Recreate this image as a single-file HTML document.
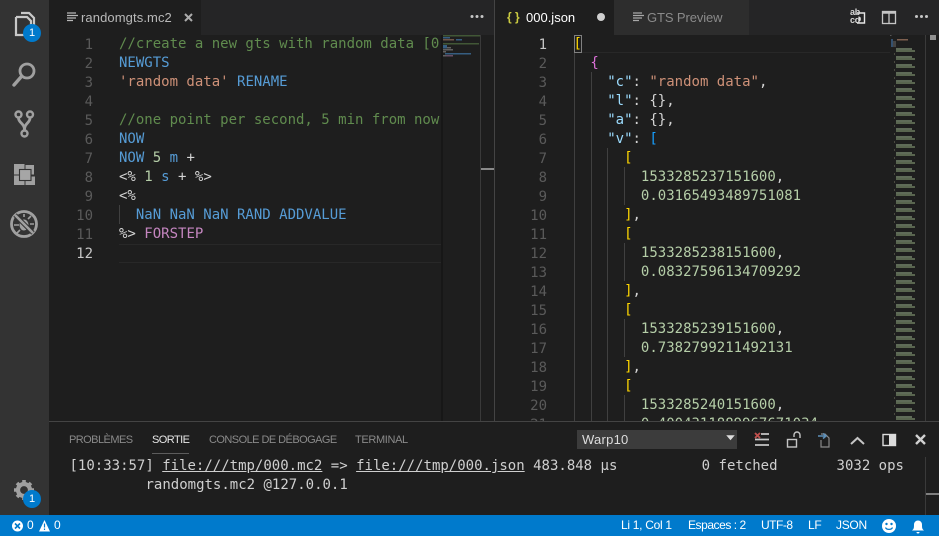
<!DOCTYPE html>
<html><head><meta charset="utf-8">
<style>
html,body{margin:0;padding:0;width:939px;height:536px;overflow:hidden;background:#1e1e1e}
.a{position:absolute}
.ui{font-family:"Liberation Sans",sans-serif;white-space:pre}
.m{font-family:"DejaVu Sans Mono","Liberation Mono",monospace;font-size:14px;line-height:19px;white-space:pre;color:#d4d4d4}
.ln{position:absolute;text-align:right;width:30px;color:#5a5a5a;margin-top:1px}
.cur{color:#c6c6c6}
.l{position:absolute;height:19px}
.c{color:#608b4e}.k{color:#569cd6}.s{color:#ce9178}.n{color:#b5cea8}.p{color:#c586c0}.j{color:#9cdcfe}
.g{color:#ffd700}.b{color:#da70d6}.u{color:#179fff}
.ig{position:absolute;width:1px;background:#404040}
.t{font-size:11px;top:434px;line-height:13px;color:#8a8a8a;letter-spacing:-.55px}
.st{font-size:12px;line-height:21px;top:515px;color:#fff;letter-spacing:-.3px}
</style></head><body>
<div class="a" style="left:0;top:0;width:939px;height:536px;overflow:hidden">

<!-- activity bar -->
<div class="a" style="left:0;top:0;width:49px;height:515px;background:#333"></div>
<svg class="a" style="left:0;top:0" width="49" height="515" fill="none">
 <path d="M21 13h8l5 5v14M16 17h11l4 4v13M16 17v18h9" stroke="#c8c8c8" stroke-width="2.2"/>
 <circle cx="27" cy="71" r="7" stroke="#a0a0a0" stroke-width="2.8"/>
 <path d="M21 77l-7 8" stroke="#a0a0a0" stroke-width="3.4" stroke-linecap="round"/>
 <g stroke="#a0a0a0" stroke-width="2.4">
  <circle cx="18.500" cy="114.500" r="3"/><circle cx="30" cy="114.500" r="3"/><circle cx="24.500" cy="133.500" r="3"/>
  <path d="M18.500 118c0 5 6 5 6 12M30 118c0 5-5.500 5-5.500 12" stroke-width="2.800"/>
 </g>
 <rect x="14" y="164" width="21" height="21" fill="#a0a0a0"/>
 <rect x="19.500" y="169.500" width="11.500" height="11" fill="#a6a6a6" stroke="#333" stroke-width="1.100"/>
 <path d="M25 164.500H34.500V175H31M25 164v5M25 181v4M14 175h5.500M31 176h4" stroke="#333" stroke-width="1"/>
 <circle cx="24" cy="224" r="12.500" stroke="#a0a0a0" stroke-width="2.800"/>
 <path d="M20 220l-4 -2M19 225h-5M20 230l-3 3M28 219l3-3M30 224h4M29 230l3 2M24 214v3" stroke="#a0a0a0" stroke-width="1.600"/>
 <ellipse cx="24" cy="225" rx="4.500" ry="5.500" fill="#a0a0a0"/>
 <path d="M15 215l18 18" stroke="#333" stroke-width="4.600"/>
 <path d="M15 215l18 18" stroke="#a0a0a0" stroke-width="2.600"/>
 <g transform="translate(24 490)">
  <circle r="6" stroke="#a0a0a0" stroke-width="4.200"/>
  <path d="M0-10V-7M0 7V10M-10 0H-7M7 0H10M-7-7L-5-5M5 5L7 7M-7 7L-5 5M5-5L7-7" stroke="#a0a0a0" stroke-width="3.600"/>
 </g>
 <circle cx="32" cy="33" r="9" fill="#007acc"/>
 <circle cx="32" cy="499" r="9" fill="#007acc"/>
</svg>
<div class="a ui" style="left:23px;top:26px;width:18px;text-align:center;font-size:11px;line-height:14px;color:#fff">1</div>
<div class="a ui" style="left:23px;top:492px;width:18px;text-align:center;font-size:11px;line-height:14px;color:#fff">1</div>

<!-- tab bars -->
<div class="a" style="left:49px;top:0;width:445px;height:35px;background:#252526"></div>
<div class="a" style="left:49px;top:0;width:152px;height:35px;background:#1e1e1e"></div>
<div class="a" style="left:495px;top:0;width:444px;height:35px;background:#252526"></div>
<div class="a" style="left:495px;top:0;width:119px;height:35px;background:#1e1e1e"></div>
<div class="a" style="left:614px;top:0;width:135px;height:35px;background:#2d2d2d"></div>
<div class="a" style="left:494px;top:0;width:1px;height:421px;background:#444"></div>

<svg class="a" style="left:0;top:0" width="939" height="35" fill="none">
 <path d="M67 13h9M67 15.500h11M67 18h9M67 20.500h6" stroke="#b8b8b8" stroke-width="1.300"/>
 <path d="M185 14l7 7M192 14l-7 7" stroke="#ababab" stroke-width="2"/>
 <circle cx="472" cy="16.500" r="1.500" fill="#c5c5c5"/><circle cx="477" cy="16.500" r="1.500" fill="#c5c5c5"/><circle cx="482" cy="16.500" r="1.500" fill="#c5c5c5"/>
 <circle cx="601" cy="17" r="4" fill="#cfcfcf"/>
 <path d="M633 13h9M633 15.500h11M633 18h9M633 20.500h6" stroke="#a8a8a8" stroke-width="1.300"/>
 <path d="M857 13h7.500v10H857" stroke="#e6e6e6" stroke-width="1.400"/>
 <path d="M858 19h3M860 17v4" stroke="#e6e6e6" stroke-width="1"/>
 <rect x="882.500" y="11.500" width="13" height="12" stroke="#c5c5c5" stroke-width="1.300"/>
 <path d="M882 12.500h14" stroke="#c5c5c5" stroke-width="2.500"/><path d="M889 12v12" stroke="#c5c5c5" stroke-width="1.300"/>
 <circle cx="916.500" cy="16.500" r="1.500" fill="#c5c5c5"/><circle cx="921.500" cy="16.500" r="1.500" fill="#c5c5c5"/><circle cx="926.500" cy="16.500" r="1.500" fill="#c5c5c5"/>
</svg>
<div class="a ui" style="left:850px;top:8px;font-size:9px;line-height:8px;color:#d8d8d8;font-weight:bold;letter-spacing:-.3px">ab<br>cd</div>
<div class="a ui" style="left:81px;top:9px;font-size:13px;line-height:17px;color:#b9b9b9;letter-spacing:.1px">randomgts.mc2</div>
<div class="a ui" style="left:507px;top:9px;font-size:12px;line-height:17px;color:#cbcb41;font-weight:bold">{ }</div>
<div class="a ui" style="left:526px;top:9px;font-size:13px;line-height:17px;color:#fff">000.json</div>
<div class="a ui" style="left:647px;top:9px;font-size:13px;line-height:17px;color:#8a8a8a;letter-spacing:-.1px">GTS Preview</div>

<!-- left editor -->
<div class="a" style="left:49px;top:35px;width:445px;height:386px;overflow:hidden">
 <div class="a" style="left:70px;top:209px;width:322px;height:19px;box-sizing:border-box;border-top:1px solid #282828;border-bottom:1px solid #282828"></div>
 <div class="ig" style="left:70px;top:170px;height:19px"></div>
</div>
<div class="a m" style="left:49px;top:35px;width:392px;height:386px;overflow:hidden">
<span class="ln" style="left:14px;top:0">1</span><span class="ln" style="left:14px;top:19px">2</span><span class="ln" style="left:14px;top:38px">3</span><span class="ln" style="left:14px;top:57px">4</span><span class="ln" style="left:14px;top:76px">5</span><span class="ln" style="left:14px;top:95px">6</span><span class="ln" style="left:14px;top:114px">7</span><span class="ln" style="left:14px;top:133px">8</span><span class="ln" style="left:14px;top:152px">9</span><span class="ln" style="left:14px;top:171px">10</span><span class="ln" style="left:14px;top:190px">11</span><span class="ln cur" style="left:14px;top:209px">12</span>
<span class="l c" style="left:70px;top:0">//create a new gts with random data [0</span>
<span class="l k" style="left:70px;top:19px">NEWGTS</span>
<span class="l" style="left:70px;top:38px"><span class="s">'random data'</span> <span class="k">RENAME</span></span>
<span class="l c" style="left:70px;top:76px">//one point per second, 5 min from now</span>
<span class="l k" style="left:70px;top:95px">NOW</span>
<span class="l" style="left:70px;top:114px"><span class="k">NOW</span> <span class="n">5</span> <span class="k">m</span> +</span>
<span class="l" style="left:70px;top:133px">&lt;% <span class="n">1</span> <span class="k">s</span> + %&gt;</span>
<span class="l" style="left:70px;top:152px">&lt;%</span>
<span class="l k" style="left:70px;top:171px">  NaN NaN NaN RAND ADDVALUE</span>
<span class="l" style="left:70px;top:190px">%&gt; <span class="p">FORSTEP</span></span>
</div>

<!-- left minimap -->
<svg class="a" style="left:441px;top:35px" width="53" height="386">
 <rect x="0" y="0" width="2" height="386" fill="#171717"/>
 <rect x="39" y="0" width="1" height="386" fill="#3a3a3a"/>
 <rect x="40" y="133" width="14" height="2" fill="#8a8a8a"/>
 <g opacity=".75">
 <rect x="2" y="0" width="37" height="1.500" fill="#4d6b3f"/>
 <rect x="2" y="2" width="7" height="1.500" fill="#3f74a3"/>
 <rect x="2" y="4" width="11" height="1.500" fill="#8c6a58"/><rect x="15" y="4" width="6" height="1.500" fill="#3f74a3"/>
 <rect x="2" y="8" width="36" height="1.500" fill="#4d6b3f"/>
 <rect x="2" y="10" width="4" height="3.500" fill="#3f74a3"/>
 <rect x="6" y="12" width="4" height="1.500" fill="#777"/>
 <rect x="2" y="14" width="10" height="1.500" fill="#777"/>
 <rect x="2" y="16" width="3" height="1.500" fill="#777"/>
 <rect x="4" y="18" width="26" height="1.500" fill="#3f74a3"/>
 <rect x="2" y="20" width="3" height="1.500" fill="#777"/><rect x="5" y="20" width="7" height="1.500" fill="#805f7c"/>
 </g>
</svg>

<!-- right editor -->
<div class="a" style="left:495px;top:35px;width:431px;height:386px;overflow:hidden">
 <div class="a" style="left:79px;top:-1px;width:316px;height:19px;box-sizing:border-box;border-top:1px solid #282828;border-bottom:1px solid #282828"></div>
 <div class="a" style="left:79px;top:0;width:8px;height:18px;box-sizing:border-box;border:1px solid #808080"></div>
</div>
<div class="ig" style="left:574px;top:53px;height:368px"></div>
<div class="ig" style="left:591px;top:72px;height:349px"></div>
<div class="ig" style="left:607px;top:148px;height:273px"></div>
<div class="ig" style="left:624px;top:167px;height:38px"></div>
<div class="ig" style="left:624px;top:243px;height:38px"></div>
<div class="ig" style="left:624px;top:319px;height:38px"></div>
<div class="ig" style="left:624px;top:395px;height:26px"></div>
<div class="a m" style="left:495px;top:35px;width:395px;height:386px;overflow:hidden">
<span class="ln cur" style="left:22px;top:0">1</span><span class="ln" style="left:22px;top:19px">2</span><span class="ln" style="left:22px;top:38px">3</span><span class="ln" style="left:22px;top:57px">4</span><span class="ln" style="left:22px;top:76px">5</span><span class="ln" style="left:22px;top:95px">6</span><span class="ln" style="left:22px;top:114px">7</span><span class="ln" style="left:22px;top:133px">8</span><span class="ln" style="left:22px;top:152px">9</span><span class="ln" style="left:22px;top:171px">10</span><span class="ln" style="left:22px;top:190px">11</span><span class="ln" style="left:22px;top:209px">12</span><span class="ln" style="left:22px;top:228px">13</span><span class="ln" style="left:22px;top:247px">14</span><span class="ln" style="left:22px;top:266px">15</span><span class="ln" style="left:22px;top:285px">16</span><span class="ln" style="left:22px;top:304px">17</span><span class="ln" style="left:22px;top:323px">18</span><span class="ln" style="left:22px;top:342px">19</span><span class="ln" style="left:22px;top:361px">20</span><span class="ln" style="left:22px;top:380px">21</span>
<span class="l g" style="left:78.500px;top:0">[</span>
<span class="l b" style="left:78.500px;top:19px">  {</span>
<span class="l" style="left:78.500px;top:38px">    <span class="j">"c"</span>: <span class="s">"random data"</span>,</span>
<span class="l" style="left:78.500px;top:57px">    <span class="j">"l"</span>: {},</span>
<span class="l" style="left:78.500px;top:76px">    <span class="j">"a"</span>: {},</span>
<span class="l" style="left:78.500px;top:95px">    <span class="j">"v"</span>: <span class="u">[</span></span>
<span class="l g" style="left:78.500px;top:114px">      [</span>
<span class="l n" style="left:78.500px;top:133px">        1533285237151600<span style="color:#d4d4d4">,</span></span>
<span class="l n" style="left:78.500px;top:152px">        0.03165493489751081</span>
<span class="l" style="left:78.500px;top:171px">      <span class="g">]</span>,</span>
<span class="l g" style="left:78.500px;top:190px">      [</span>
<span class="l n" style="left:78.500px;top:209px">        1533285238151600<span style="color:#d4d4d4">,</span></span>
<span class="l n" style="left:78.500px;top:228px">        0.08327596134709292</span>
<span class="l" style="left:78.500px;top:247px">      <span class="g">]</span>,</span>
<span class="l g" style="left:78.500px;top:266px">      [</span>
<span class="l n" style="left:78.500px;top:285px">        1533285239151600<span style="color:#d4d4d4">,</span></span>
<span class="l n" style="left:78.500px;top:304px">        0.7382799211492131</span>
<span class="l" style="left:78.500px;top:323px">      <span class="g">]</span>,</span>
<span class="l g" style="left:78.500px;top:342px">      [</span>
<span class="l n" style="left:78.500px;top:361px">        1533285240151600<span style="color:#d4d4d4">,</span></span>
<span class="l n" style="left:78.500px;top:380px">        0.4004311889967671034</span>
</div>

<!-- right minimap -->
<svg class="a" style="left:890px;top:35px" width="49" height="386">
 <defs>
  <pattern id="mm" x="0" y="13" width="49" height="8" patternUnits="userSpaceOnUse">
   <rect x="6" y="0" width="16" height="2" fill="#5f6b58"/>
   <rect x="6" y="2" width="19" height="2" fill="#59654f"/>
   <rect x="4" y="5" width="1" height="2" fill="#4a4a40"/>
  </pattern>
 </defs>
 <rect x="0" y="13" width="25" height="373" fill="url(#mm)"/>
 <rect x="0" y="0" width="1.500" height="1" fill="#555"/>
 <rect x="1" y="4" width="2" height="8" fill="#34506e"/>
 <rect x="7" y="4" width="11" height="1.500" fill="#7d5f4f"/>
 <rect x="3" y="6" width="3" height="6" fill="#444"/>
 <rect x="35" y="0" width="1" height="386" fill="#3a3a3a"/>
 <rect x="40" y="-1" width="6" height="6" fill="#909090"/>
</svg>

<!-- panel -->
<div class="a" style="left:49px;top:421px;width:890px;height:94px;background:#1e1e1e;border-top:1px solid #444;box-sizing:border-box"></div>
<div class="a ui t" style="left:69px">PROBLÈMES</div>
<div class="a ui t" style="left:152px;color:#e7e7e7">SORTIE</div>
<div class="a" style="left:152px;top:453px;width:37px;height:1px;background:#5c5c5c"></div>
<div class="a ui t" style="left:209px">CONSOLE DE DÉBOGAGE</div>
<div class="a ui t" style="left:355px;letter-spacing:-.35px">TERMINAL</div>
<div class="a" style="left:577px;top:430px;width:160px;height:19px;background:#3c3c3c"></div>
<div class="a ui" style="left:582px;top:431px;font-size:13px;line-height:17px;color:#ddd;letter-spacing:.25px">Warp10</div>
<svg class="a" style="left:720px;top:424px" width="219" height="32" fill="none">
 <path d="M5 12h10l-5 6z" fill="#ddd" transform="translate(2,1) scale(.85)"/>
 <path d="M41 10h8M35 15.500h14M35 21h14" stroke="#c5c5c5" stroke-width="1.800"/>
 <path d="M35 9l5 5M40 9l-5 5" stroke="#c0504d" stroke-width="1.800"/>
 <rect x="67.500" y="15.500" width="9" height="7.500" stroke="#c5c5c5" stroke-width="1.400"/>
 <path d="M74 13v-2a3 3 0 016 0v3" stroke="#c5c5c5" stroke-width="1.400"/>
 <path d="M101 10h4l4 4v9H101v-7" stroke="#8a8a8a" stroke-width="1.200"/>
 <path d="M98 12h7M103 9.500l3 2.500-3 2.500" stroke="#5d8fb8" stroke-width="1.500"/>
 <path d="M131 20l6.500-6 6.500 6" stroke="#c5c5c5" stroke-width="2"/>
 <rect x="163" y="10.500" width="12.500" height="11" stroke="#dcdcdc" stroke-width="1.400"/>
 <rect x="169" y="10" width="7" height="12" fill="#dcdcdc"/>
 <path d="M196 11l9 9M205 11l-9 9" stroke="#d0d0d0" stroke-width="2.400"/>
</svg>
<div class="a m" style="left:69.500px;top:457px;color:#cfcfcf">[10:33:57] <span style="text-decoration:underline">file:///tmp/000.mc2</span> =&gt; <span style="text-decoration:underline">file:///tmp/000.json</span> 483.848 µs          0 fetched       3032 ops</div>
<div class="a m" style="left:145.500px;top:476px;color:#cfcfcf">randomgts.mc2 @127.0.0.1</div>
<div class="a" style="left:925px;top:457px;width:1px;height:58px;background:#3a3a3a"></div>
<div class="a" style="left:926px;top:493px;width:13px;height:2px;background:#808080"></div>

<!-- status bar -->
<div class="a" style="left:0;top:515px;width:939px;height:21px;background:#007acc"></div>
<svg class="a" style="left:0;top:515px" width="939" height="21" fill="none">
 <circle cx="17.500" cy="11" r="5.500" fill="#fff"/>
 <path d="M15 8.500l5 5M20 8.500l-5 5" stroke="#007acc" stroke-width="1.600"/>
 <path d="M44.500 5l5.500 11.500H39z" fill="#fff"/>
 <path d="M44.500 8.500v4M44.500 13.500v1.500" stroke="#007acc" stroke-width="1.200"/>
 <circle cx="889" cy="11" r="7" fill="#fff"/>
 <circle cx="886.500" cy="9" r="1.200" fill="#007acc"/><circle cx="891.500" cy="9" r="1.200" fill="#007acc"/>
 <path d="M885.500 12.500c1 2.500 6 2.500 7 0" stroke="#007acc" stroke-width="1.200"/>
 <path d="M912 15.500c2-1.500 2-3 2-6a4 4 0 018 0c0 3 0 4.500 2 6z" fill="#fff"/>
 <path d="M916.500 17h3a1.500 1.500 0 01-3 0z" fill="#fff"/>
</svg>
<div class="a ui st" style="left:27px">0</div>
<div class="a ui st" style="left:54px">0</div>
<div class="a ui st" style="left:621px">Li 1, Col 1</div>
<div class="a ui st" style="left:688px;letter-spacing:-.45px">Espaces : 2</div>
<div class="a ui st" style="left:761px;letter-spacing:-.5px">UTF-8</div>
<div class="a ui st" style="left:808px">LF</div>
<div class="a ui st" style="left:836px">JSON</div>
</div>
</body></html>
